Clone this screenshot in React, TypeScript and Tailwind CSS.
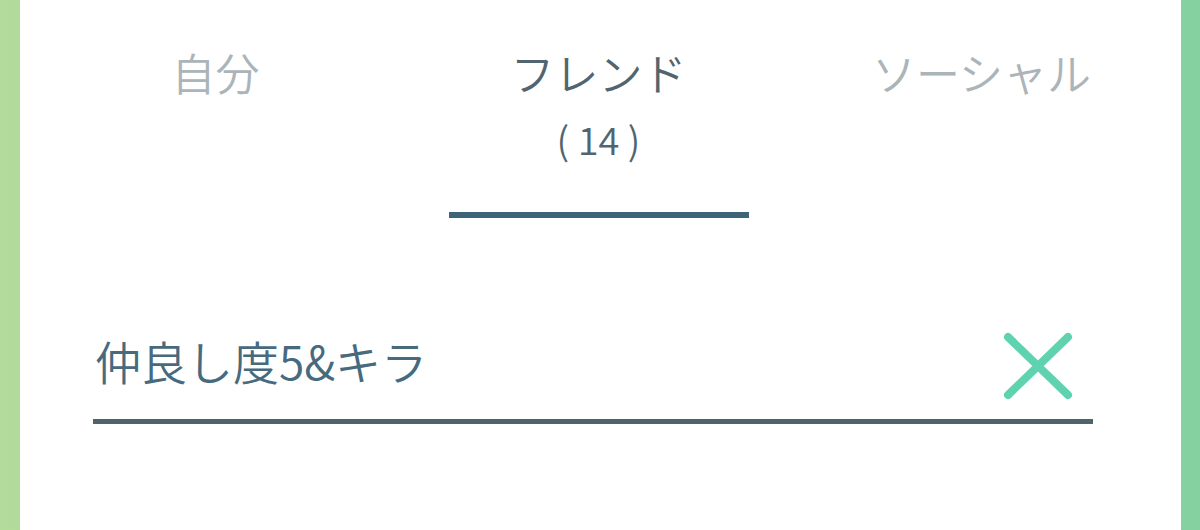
import React from 'react';

const font = { fontFamily: '"Noto Sans CJK JP", "Noto Sans", sans-serif' };

const tabs = [
  { id: 'self', label: '自分', active: false },
  { id: 'friend', label: 'フレンド', active: true, count: 14 },
  { id: 'social', label: 'ソーシャル', active: false },
];

const App: React.FC = () => {
  return (
    <div className="w-[1200px] h-[530px] bg-gradient-to-r from-[#b3db9a] to-[#86d1a0] flex overflow-hidden" style={font}>
      <div className="ml-[20px] w-[1161px] h-full bg-white flex flex-col">
        {/* tabs */}
        <div className="grid grid-cols-3 ml-[4px] mr-[8px] pt-[50px]">
          {tabs.map((tab) => (
            <div key={tab.id} className="flex flex-col items-center">
              <span className={`text-[44px] leading-[44px] font-[350] ${tab.active ? 'text-[#52656e]' : 'text-[#abb4b9]'}`}>
                {tab.label}
              </span>
              {tab.count !== undefined && (
                <>
                  <span className="mt-[25px] text-[38px] leading-[40px] font-[350] text-[#52656e]">( {tab.count} )</span>
                  <div className="mt-[53px] w-[300px] h-[6px] bg-[#3e6479]" />
                </>
              )}
            </div>
          ))}
        </div>

        {/* search field */}
        <div className="ml-[73px] w-[1000px] mt-[114px]">
          <div className="flex items-start justify-between">
            <span className="mt-[5px] pl-[2px] text-[46px] leading-[46px] font-[350] text-[#476a7f]">仲良し度5&キラ</span>
            <svg className="mr-[20px]" width="70" height="68" viewBox="0 0 70 68" fill="none">
              <path d="M5 5 L65 63 M65 5 L5 63" stroke="#5fd3b0" strokeWidth="8" strokeLinecap="round" />
            </svg>
          </div>
          <div className="mt-[19px] h-[5px] bg-[#4e636c]" />
        </div>
      </div>
    </div>
  );
};

export default App;
